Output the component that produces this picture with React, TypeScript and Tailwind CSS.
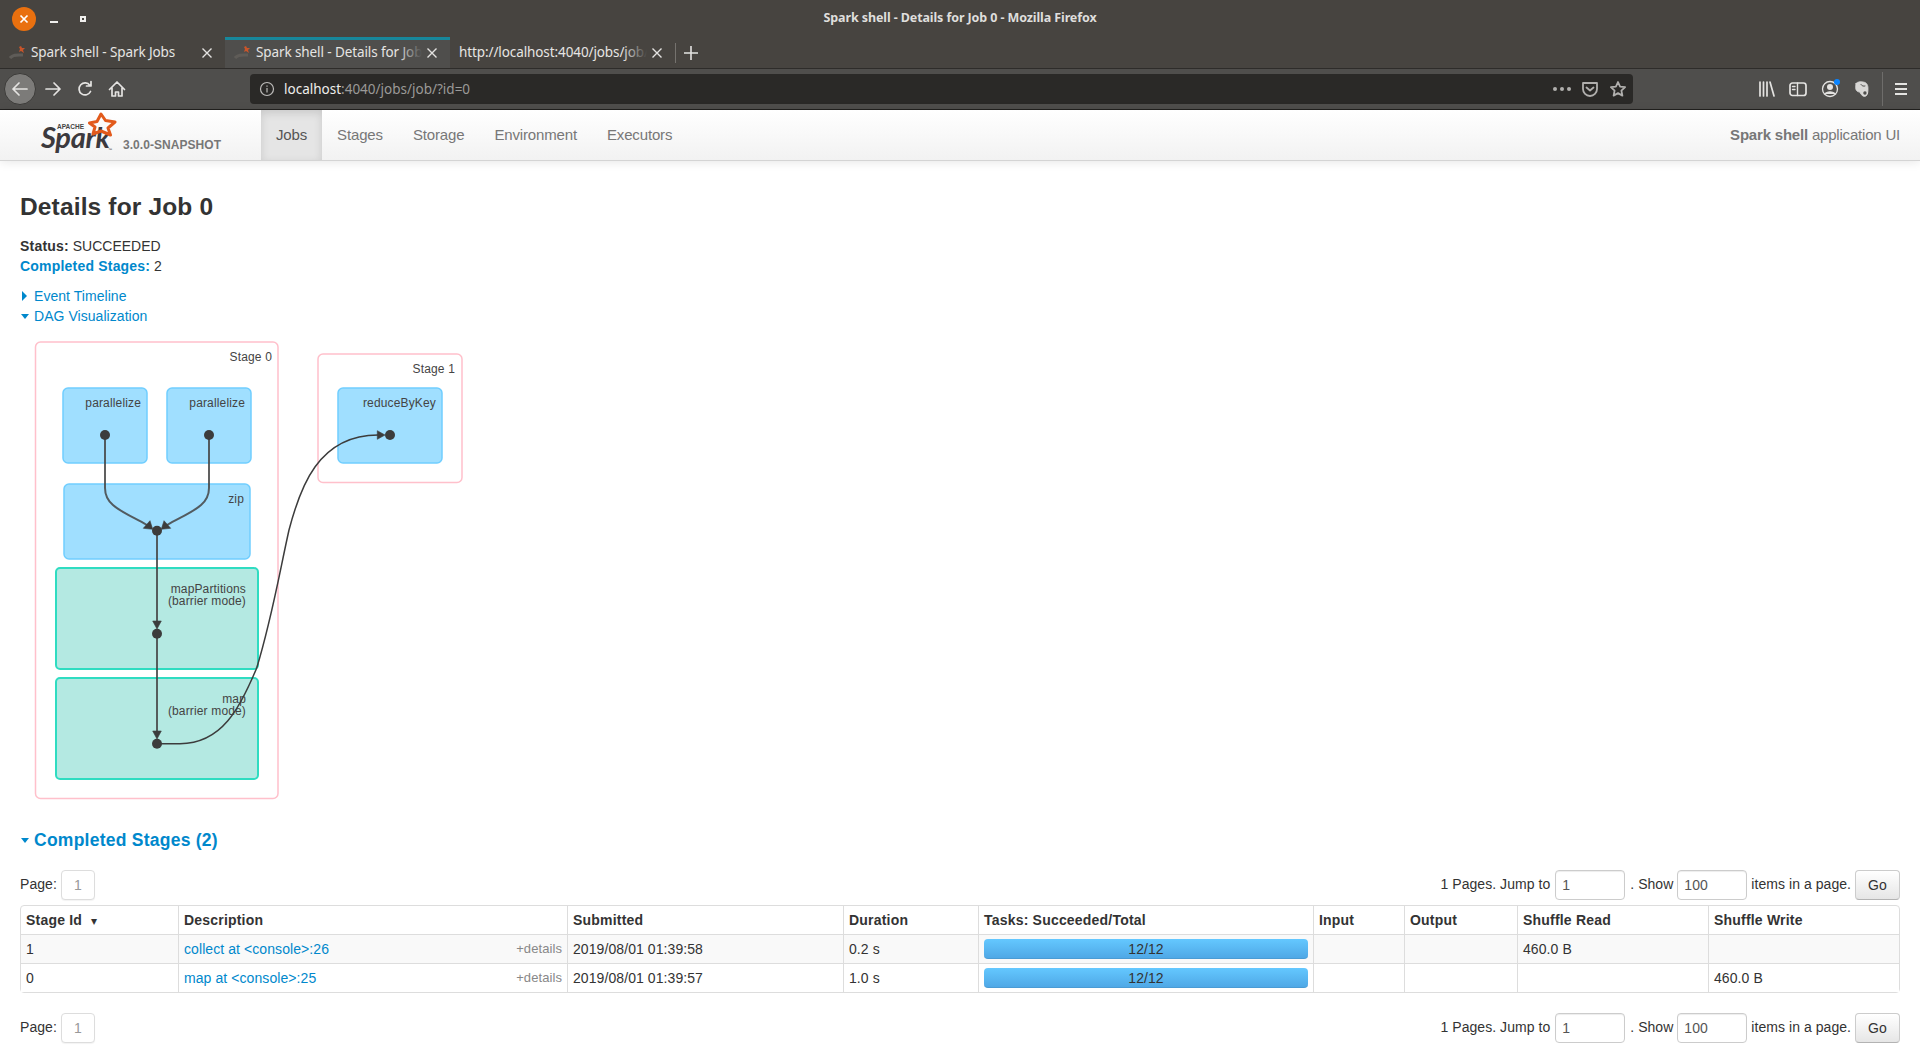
import type { ReactNode } from 'react';

const tabs = [
  { title: 'Spark shell - Spark Jobs', active: false, favicon: true },
  { title: 'Spark shell - Details for Job 0', active: true, favicon: true },
  { title: 'http://localhost:4040/jobs/job/?id=0', active: false, favicon: false },
];

const navItems = ['Jobs', 'Stages', 'Storage', 'Environment', 'Executors'];

const columns = [
  { name: 'Stage Id', w: 'w-[157px]' },
  { name: 'Description', w: 'w-[389px]' },
  { name: 'Submitted', w: 'w-[276px]' },
  { name: 'Duration', w: 'w-[135px]' },
  { name: 'Tasks: Succeeded/Total', w: 'w-[335px]' },
  { name: 'Input', w: 'w-[91px]' },
  { name: 'Output', w: 'w-[113px]' },
  { name: 'Shuffle Read', w: 'w-[191px]' },
  { name: 'Shuffle Write', w: 'w-[191px]' },
];

const stages = [
  { id: '1', desc: 'collect at <console>:26', submitted: '2019/08/01 01:39:58', duration: '0.2 s', read: '460.0 B', write: '', bg: 'bg-[#f9f9f9]' },
  { id: '0', desc: 'map at <console>:25', submitted: '2019/08/01 01:39:57', duration: '1.0 s', read: '', write: '460.0 B', bg: 'bg-white' },
];

function Favicon() {
  return (
    <svg width="18" height="16" viewBox="0 0 18 16" className="shrink-0">
      <path d="M1 13c3-4 8-3 13-3" stroke="#5f5c58" strokeWidth="3" fill="none" />
      <path d="M12 1l1 2 3 0-2 2 1 3-3-2-2 1 1-3-1-2z" fill="#c9552a" />
    </svg>
  );
}

function TabClose() {
  return (
    <svg width="12" height="12" viewBox="0 0 12 12" className="shrink-0">
      <path d="M1.5 1.5l9 9M10.5 1.5l-9 9" stroke="#e4e3e1" strokeWidth="1.4" />
    </svg>
  );
}

function BrowserTab({ title, active, favicon }: { title: string; active: boolean; favicon: boolean }) {
  return (
    <div
      className={
        'w-[225px] h-full flex items-center pl-[9px] pr-[12px] gap-[4px] ' +
        (active ? 'bg-[#4f4e4c] border-t-[3px] border-[#17879b] pb-[3px]' : '')
      }
    >
      {favicon && <Favicon />}
      <div className="relative flex-1 overflow-hidden whitespace-nowrap text-[13.5px] text-[#e6e5e3] font-['Noto_Sans',sans-serif] tracking-[-0.1px]">
        {title}
        <div className={'absolute right-0 top-0 bottom-0 w-6 bg-gradient-to-r from-transparent ' + (active ? 'to-[#4f4e4c]' : 'to-[#474440]')} />
      </div>
      <TabClose />
    </div>
  );
}

function ToolIcon({ children, w = 20 }: { children: ReactNode; w?: number }) {
  return (
    <svg width={w} height="20" viewBox="0 0 20 20" fill="none" stroke="#e4e3e1" strokeWidth="1.7" strokeLinecap="round" strokeLinejoin="round">
      {children}
    </svg>
  );
}

function BrowserChrome() {
  return (
    <div className="bg-[#474440] font-['Noto_Sans',sans-serif]">
      <div className="h-[37px] relative flex items-center">
        <div className="ml-3 w-6 h-6 rounded-full bg-[#e9700f] flex items-center justify-center">
          <svg width="10" height="10" viewBox="0 0 10 10">
            <path d="M1.5 1.5l7 7M8.5 1.5l-7 7" stroke="#fff" strokeWidth="1.7" />
          </svg>
        </div>
        <div className="ml-[14px] mt-[7px] w-2 h-[2px] bg-[#f0efed]" />
        <div className="ml-[22px] w-[6px] h-[6px] border-2 border-[#f0efed]" />
        <div className="absolute inset-x-0 top-[9px] text-center text-[12.5px] leading-[18px] font-bold tracking-[-0.1px] text-[#dfdedc]">
          Spark shell - Details for Job 0 - Mozilla Firefox
        </div>
      </div>
      <div className="h-[32px] flex items-stretch border-b border-[#2e2c2a]">
        {tabs.map((t) => (
          <BrowserTab key={t.title} {...t} />
        ))}
        <div className="w-px h-5 self-center bg-[#75726e]" />
        <div className="ml-[8px] flex items-center">
          <svg width="14" height="14" viewBox="0 0 14 14">
            <path d="M7 0v14M0 7h14" stroke="#e4e3e1" strokeWidth="1.6" />
          </svg>
        </div>
      </div>
      <div className="h-[41px] bg-[#4f4e4c] border-b border-[#22211f] flex items-center">
        <div className="ml-1 w-8 h-8 rounded-full bg-[#7c7b79] border border-[#3c3b39] flex items-center justify-center">
          <ToolIcon>
            <path d="M17 10H3M9 4l-6 6 6 6" />
          </ToolIcon>
        </div>
        <div className="ml-[7px]">
          <ToolIcon>
            <path d="M3 10h14M11 4l6 6-6 6" />
          </ToolIcon>
        </div>
        <div className="ml-3">
          <ToolIcon>
            <path d="M15.5 12.5a6 6 0 1 1-.6-6.1M16 2.5v4.500h-4.500" />
          </ToolIcon>
        </div>
        <div className="ml-3">
          <ToolIcon>
            <path d="M2.500 10.500L10 3l7.500 7.500M5 9v8h3.500v-4h3v4H15V9" />
          </ToolIcon>
        </div>
        <div className="ml-[123px] w-[1383px] h-[30px] rounded-[4px] bg-[#2a2927] flex items-center pl-[9px] pr-[6px]">
          <svg width="16" height="16" viewBox="0 0 16 16" fill="none" stroke="#bdbcba" strokeWidth="1.200">
            <circle cx="8" cy="8" r="6.500" />
            <path d="M8 7v4.500M8 4.500v1.300" />
          </svg>
          <div className="ml-[9px] flex-1 text-[13.5px] text-[#9b9a98] whitespace-nowrap">
            <span className="text-[#efeeec]">localhost</span>:4040/jobs/job/?id=0
          </div>
          <div className="flex items-center gap-[3px] mr-[10px]">
            <div className="w-[4px] h-[4px] rounded-full bg-[#b0afad]" />
            <div className="w-[4px] h-[4px] rounded-full bg-[#b0afad]" />
            <div className="w-[4px] h-[4px] rounded-full bg-[#b0afad]" />
          </div>
          <svg width="18" height="18" viewBox="0 0 18 18" fill="none" stroke="#b0afad" strokeWidth="1.800" strokeLinejoin="round">
            <path d="M2 3h14v6a7 7 0 0 1-14 0z" />
            <path d="M5.500 7.500L9 10.500l3.500-3" strokeLinecap="round" />
          </svg>
          <svg width="18" height="18" viewBox="0 0 18 18" fill="none" stroke="#b0afad" strokeWidth="1.800" strokeLinejoin="round" className="ml-[10px]">
            <path d="M9 2l2.100 4.600 5 .6-3.700 3.400 1 5L9 13.100 4.600 15.600l1-5L1.900 7.200l5-.6z" />
          </svg>
        </div>
        <div className="ml-[124px]">
          <ToolIcon>
            <path d="M3 3v14M6.500 3v14M10 3v14M13 3l4 14" />
          </ToolIcon>
        </div>
        <div className="ml-[11px]">
          <ToolIcon>
            <rect x="2" y="4" width="16" height="12.500" rx="2.500" />
            <path d="M9.500 4v12.500M4.500 7.500h2.500M4.500 10.500h2.500" strokeWidth="1.400" />
          </ToolIcon>
        </div>
        <div className="ml-3 relative">
          <ToolIcon>
            <circle cx="10" cy="10" r="7.500" strokeWidth="1.300" />
            <circle cx="10" cy="8" r="3" fill="#e4e3e1" stroke="none" />
            <path d="M4.500 15c1.500-3 9.500-3 11 0" fill="#e4e3e1" strokeWidth="1" />
          </ToolIcon>
          <div className="absolute top-0 right-0 w-[6px] h-[6px] rounded-full bg-[#0a84ff]" />
        </div>
        <div className="ml-3">
          <ToolIcon>
            <path
              d="M4 4.500C5.500 2.500 9 2.500 11 3c3 .3 5 2 5 6.500 0 3.500-.3 6-2 7.500-1.500 .8-3.500 .5-4-1 -1-.5-2-2-2.200-3 -2 0-3.500-1-4-3-.3-2 0-4 .2-5.500z"
              fill="#d8d7d5"
              stroke="#d8d7d5"
              strokeWidth="0.800"
            />
            <circle cx="13" cy="14" r="2.300" fill="#4f4e4c" stroke="#e4e3e1" strokeWidth="1" />
            <path d="M9 5.500c1 1.500 2.500 2 4 1.500" stroke="#4f4e4c" strokeWidth="1" />
          </ToolIcon>
        </div>
        <div className="ml-[10px] w-px h-[34px] bg-[#6e6d6b]" />
        <div className="ml-[12px] w-3 flex flex-col gap-[3px]">
          <div className="h-[2px] bg-[#e4e3e1]" />
          <div className="h-[2px] bg-[#e4e3e1]" />
          <div className="h-[2px] bg-[#e4e3e1]" />
        </div>
      </div>
    </div>
  );
}

function SparkLogo() {
  return (
    <div className="relative w-[100px] h-[50px] ml-[37px] shrink-0">
      <span className="absolute left-[20px] top-[14px] text-[6.500px] leading-[5px] font-bold text-[#444]">APACHE</span>
      <span className="absolute left-[4px] top-[19px] text-[29px] leading-[16px] font-['Lato',sans-serif] font-bold italic tracking-[-0.3px] text-[#3c3a3e]">
        Spark
      </span>
      <svg width="29" height="26" viewBox="0 0 29 26" className="absolute left-[51px] top-[2px]">
        <path
          d="M13 2L17.500 8.500L27 10L20 16L22.500 23L13 19L5 22L7 15L1.500 11L9 9.500Z"
          fill="none"
          stroke="#e25a1c"
          strokeWidth="3"
          strokeLinejoin="round"
        />
      </svg>
      <span className="absolute left-[71px] top-[38px] text-[4px] leading-[4px] text-[#3c3a3e]">™</span>
    </div>
  );
}

function SparkNav() {
  return (
    <div className="h-[51px] flex bg-gradient-to-b from-white to-[#f2f2f2] border-b border-[#d4d4d4] shadow-[0_1px_10px_rgba(0,0,0,0.1)] relative">
      <SparkLogo />
      <div className="w-[138px] -ml-[14px] pt-[27px] text-[12px] leading-[16px] font-bold tracking-[0.05px] text-[#777] whitespace-nowrap">3.0.0-SNAPSHOT</div>
      <div className="flex tracking-[-0.15px]">
        {navItems.map((n, i) => (
          <div
            key={n}
            className={
              'px-[15px] flex items-center text-[15px] ' +
              (i === 0 ? 'bg-[#e5e5e5] text-[#555] shadow-[inset_0_3px_8px_rgba(0,0,0,0.125)]' : 'text-[#777]')
            }
          >
            {n}
          </div>
        ))}
      </div>
      <div className="ml-auto pr-5 flex items-center text-[15px] tracking-[-0.2px] text-[#777]">
        <span>
          <strong>Spark shell</strong> application UI
        </span>
      </div>
    </div>
  );
}

function StageBox({ x, y, w, h }: { x: number; y: number; w: number; h: number }) {
  return <rect x={x} y={y} width={w} height={h} rx="5" fill="#fff" stroke="#ffc0cb" strokeWidth="1.500" />;
}

function RddBox({ x, y, w, h }: { x: number; y: number; w: number; h: number }) {
  return <rect x={x} y={y} width={w} height={h} rx="5" fill="#a0dfff" stroke="#70ceff" strokeWidth="1.500" />;
}

function BarrierBox({ x, y, w, h }: { x: number; y: number; w: number; h: number }) {
  return <rect x={x} y={y} width={w} height={h} rx="4" fill="#b4e9e2" stroke="#2fdcc1" strokeWidth="2" />;
}

function Label({ x, y, children }: { x: number; y: number; children: ReactNode }) {
  return (
    <text x={x} y={y} textAnchor="end" fontSize="12" letterSpacing="0.15" fill="#444">
      {children}
    </text>
  );
}

function Dag() {
  return (
    <svg width="480" height="480" viewBox="20 330 480 480" className="block font-['Liberation_Sans',sans-serif]">
      <StageBox x={35.500} y={342} w={242.500} h={456.500} />
      <StageBox x={318} y={354} w={144} h={128.500} />
      <RddBox x={63} y={388} w={84} h={75} />
      <RddBox x={167} y={388} w={84} h={75} />
      <RddBox x={338} y={388} w={104} h={75} />
      <RddBox x={64} y={484} w={186} h={75} />
      <BarrierBox x={56} y={568} w={202} h={101} />
      <BarrierBox x={56} y={678} w={202} h={101} />

      <Label x={272} y={361}>Stage 0</Label>
      <Label x={455} y={373}>Stage 1</Label>
      <Label x={141} y={407}>parallelize</Label>
      <Label x={245} y={407}>parallelize</Label>
      <Label x={436} y={407}>reduceByKey</Label>
      <Label x={244} y={503}>zip</Label>
      <Label x={246} y={593}>mapPartitions</Label>
      <Label x={246} y={605}>(barrier mode)</Label>
      <Label x={246} y={703}>map</Label>
      <Label x={246} y={715}>(barrier mode)</Label>

      <g fill="none" stroke="#444" strokeOpacity="0.85" strokeWidth="2">
        <path d="M105 435V488C105 506 122 511 147 525" />
        <path d="M209 435V488C209 506 192 511 167 525" />
        <path d="M157 531V623" />
        <path d="M157 634V733" />
      </g>
      <path
        d="M157 743.700H180C222 743.700 240 708 256.700 668C272 618 280 570 289 530C300 488 318 435 378 435"
        fill="none"
        stroke="#3c3c3c"
        strokeWidth="1.500"
      />
      <g fill="#3c3c3c" stroke="#3c3c3c" strokeWidth="0.600">
        <path d="M143.300 528.300L150 520.700L152.700 529.300Z" />
        <path d="M170.700 528.300L164 520.700L161.300 529.300Z" />
        <path d="M152.700 621H161.300L157 629Z" />
        <path d="M152.700 731H161.300L157 739Z" />
        <path d="M377.300 430.700V439.300L385 435Z" />
      </g>
      <g fill="#3c3c3c">
        <circle cx="105" cy="435" r="5" />
        <circle cx="209" cy="435" r="5" />
        <circle cx="157" cy="530.700" r="5" />
        <circle cx="157" cy="633.700" r="5" />
        <circle cx="157" cy="743.700" r="5" />
        <circle cx="390" cy="435" r="5" />
      </g>
    </svg>
  );
}

const inputClass =
  'w-[70px] h-[30px] rounded-[4px] border border-[#ccc] bg-white shadow-[inset_0_1px_1px_rgba(0,0,0,0.075)] pl-[6px] flex items-center text-[14px] text-[#555]';

function Pager() {
  return (
    <div className="h-[30px] flex items-start text-[14px] leading-[28px] tracking-[0.05px]">
      <span>Page:</span>
      <div className="ml-[4px] w-[34px] h-[30px] rounded-[4px] border border-[#ddd] bg-white shadow-[0_1px_1px_rgba(0,0,0,0.05)] flex items-center justify-center text-[#999]">
        1
      </div>
      <div className="ml-auto flex items-start">
        <span>1 Pages. Jump to</span>
        <div className={inputClass + ' ml-[5px]'}>1</div>
        <span className="ml-[5px]">. Show</span>
        <div className={inputClass + ' ml-[4px]'}>100</div>
        <span className="ml-[4px]">items in a page.</span>
        <div className="ml-[4px] w-[45px] h-[30px] rounded-[4px] border border-[#ccc] border-b-[#b3b3b3] bg-gradient-to-b from-white to-[#e6e6e6] flex items-center justify-center text-[#333]">
          Go
        </div>
      </div>
    </div>
  );
}

function ProgressBar() {
  return (
    <div className="h-5 rounded-[4px] bg-gradient-to-b from-[#64c8ff] to-[#4fa8e6] border-b border-[#4a9bd4] text-center text-[14px] leading-5 text-[#333]">
      12/12
    </div>
  );
}

const cellClass = 'px-[5px] py-1 border-l border-t border-[#ddd] first:border-l-0 tracking-[0.08px]';

function StagesTable() {
  return (
    <table className="mt-[5px] w-[1880px] table-fixed border-separate border-spacing-0 border border-[#ddd] rounded-[4px] text-[14px] leading-5">
      <colgroup>
        {columns.map((c) => (
          <col key={c.name} className={c.w} />
        ))}
      </colgroup>
      <thead>
        <tr>
          {columns.map((c, i) => (
            <th key={c.name} className="px-[5px] py-1 border-l border-[#ddd] first:border-l-0 text-left font-bold tracking-[0.2px]">
              {c.name}
              {i === 0 && <span className="ml-[9px] font-['DejaVu_Sans',sans-serif] text-[12px] leading-none">▾</span>}
            </th>
          ))}
        </tr>
      </thead>
      <tbody>
        {stages.map((s) => (
          <tr key={s.id} className={s.bg}>
            <td className={cellClass}>{s.id}</td>
            <td className={cellClass}>
              <div className="flex justify-between">
                <span className="text-[#08c]">{s.desc}</span>
                <span className="text-[13px] text-[#888]">+details</span>
              </div>
            </td>
            <td className={cellClass}>{s.submitted}</td>
            <td className={cellClass}>{s.duration}</td>
            <td className={cellClass}>
              <ProgressBar />
            </td>
            <td className={cellClass}></td>
            <td className={cellClass}></td>
            <td className={cellClass}>{s.read}</td>
            <td className={cellClass}>{s.write}</td>
          </tr>
        ))}
      </tbody>
    </table>
  );
}

function CaretRight() {
  return <div className="w-0 h-0 border-y-[5px] border-y-transparent border-l-[5px] border-l-[#08c] ml-[2px] mr-[7px]" />;
}

function CaretDown() {
  return <div className="w-0 h-0 border-x-[4.500px] border-x-transparent border-t-[5px] border-t-[#08c] ml-[1px] mr-[5px]" />;
}

export default function App() {
  return (
    <div className="w-[1920px] h-[1048px] overflow-hidden bg-white text-[#333] font-['Liberation_Sans',sans-serif]">
      <BrowserChrome />
      <SparkNav />
      <div className="px-5 pt-[26px]">
        <h3 className="text-[24.500px] leading-10 font-bold tracking-[0.15px]">Details for Job 0</h3>
        <div className="mt-[9px] text-[14px] leading-5">
          <div>
            <strong className="tracking-[0.2px]">Status:</strong> SUCCEEDED
          </div>
          <div>
            <strong className="text-[#08c] tracking-[0.2px]">Completed Stages:</strong> 2
          </div>
        </div>
        <div className="mt-[10px] flex items-center h-5 text-[14px] text-[#08c] tracking-[0.05px]">
          <CaretRight />
          Event Timeline
        </div>
        <div className="flex items-center h-5 text-[14px] text-[#08c] tracking-[0.05px]">
          <CaretDown />
          DAG Visualization
        </div>
        <div className="mt-1">
          <Dag />
        </div>
        <div className="mt-5 flex items-center h-5 text-[17.500px] font-bold text-[#08c] tracking-[0.25px]">
          <CaretDown />
          <span>Completed Stages (2)</span>
        </div>
        <div className="mt-5">
          <Pager />
        </div>
        <StagesTable />
        <div className="mt-5">
          <Pager />
        </div>
      </div>
    </div>
  );
}
